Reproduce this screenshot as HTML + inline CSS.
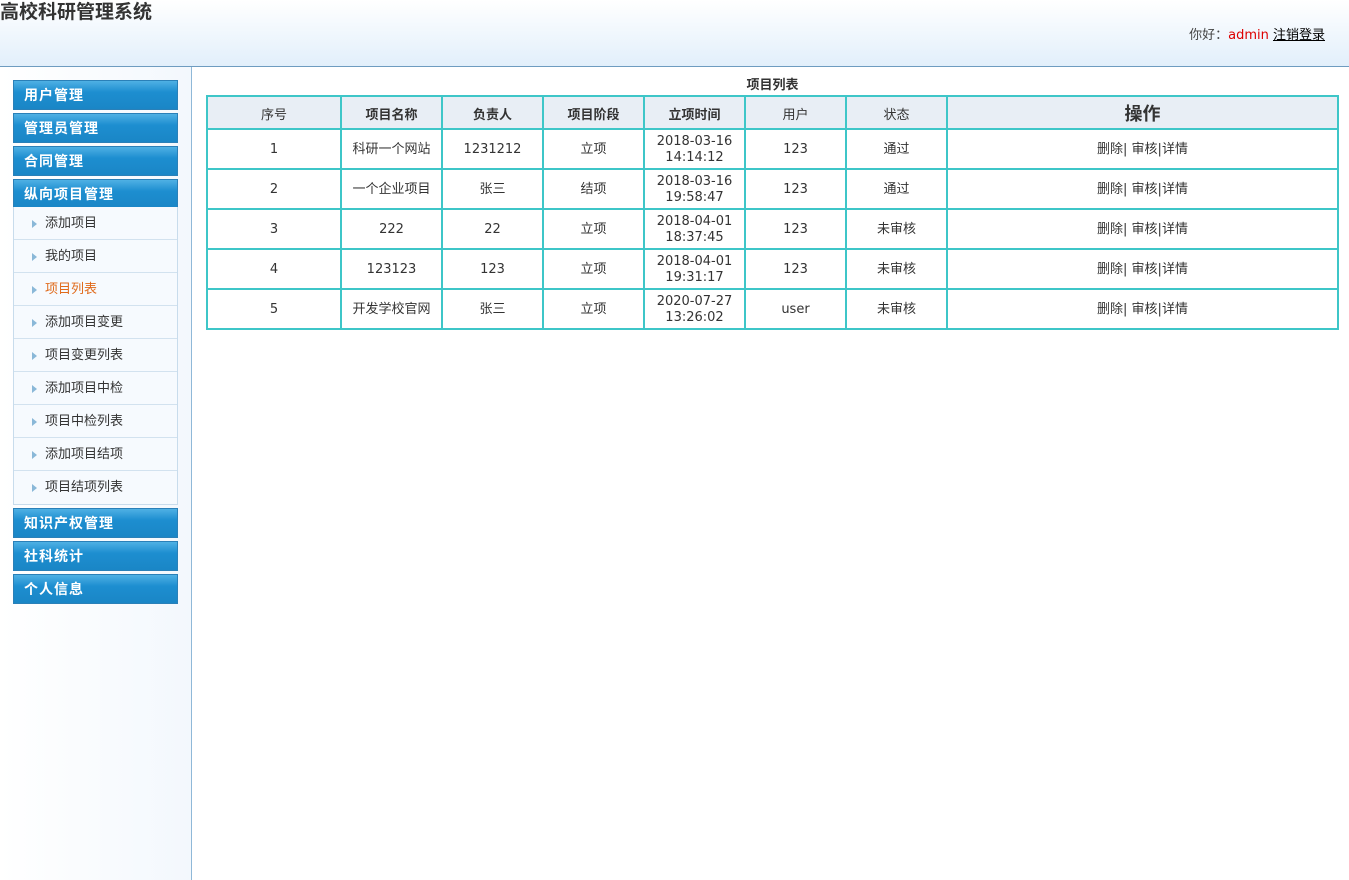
<!DOCTYPE html>
<html><head><meta charset="utf-8"><style>
*{margin:0;padding:0;box-sizing:border-box}
body{width:1349px;height:880px;overflow:hidden;font-family:"DejaVu Sans","Noto Sans CJK SC",sans-serif;font-size:13px;color:#333;background:#fff;position:relative}
#hd{position:absolute;left:0;top:0;width:1349px;height:67px;background:linear-gradient(#fff,#e2effb);border-bottom:1px solid #6e9cc0}
#hd h1{position:absolute;left:0;top:1px;font-size:19px;font-weight:bold;color:#333;line-height:24px;font-family:"Liberation Sans","Noto Sans CJK SC",sans-serif}
#hd .u{position:absolute;right:24px;top:24px;font-size:13px;color:#444}
#hd .u span{color:#d00}
#hd .u a{color:#000;text-decoration:underline}
#sb{position:absolute;left:0;top:67px;width:192px;height:813px;background:linear-gradient(90deg,#fff,#f3f8fd);border-right:1px solid #8fb8d8}
.b{position:absolute;left:13px;width:165px;height:30px;background:linear-gradient(#4fb0e4,#1d8ed0 40%,#1a86c6);border:1px solid #2a80b8;color:#fff;font-weight:bold;font-size:14px;line-height:29px;padding-left:10px;letter-spacing:1px;font-family:"Liberation Sans","Noto Sans CJK SC",sans-serif}
.sub{position:absolute;left:13px;top:140px;width:165px;background:#f6fafe;border:1px solid #c8dcec;border-top:none}
.sub div{height:33px;line-height:34px;border-bottom:1px solid #d2e2ef;padding-left:31px;position:relative;color:#333}
.sub div:last-child{border-bottom:none}
.sub div:before{content:"";position:absolute;left:18px;top:13px;border-left:5px solid #8ab8d8;border-top:4px solid transparent;border-bottom:4px solid transparent}
.sub .on{color:#e06a1a}
#tt{position:absolute;left:207px;width:1131px;top:74px;text-align:center;font-weight:bold;font-size:13px}
table{position:absolute;left:206px;top:95px;border-collapse:collapse;width:1133px}
td,th{border:2px solid #3ec6c8;text-align:center;font-size:13px}
th{background:#e8eef5;height:33px;font-weight:bold;padding-top:1px}
td{height:40px;line-height:16px;padding-top:2px}
</style></head><body>
<div id="hd"><h1>高校科研管理系统</h1><div class="u">你好：<span>admin</span> <a>注销登录</a></div></div>
<div id="sb">
<div class="b" style="top:13px">用户管理</div>
<div class="b" style="top:46px">管理员管理</div>
<div class="b" style="top:79px">合同管理</div>
<div class="b" style="top:112px">纵向项目管理</div>
<div class="sub">
<div>添加项目</div><div>我的项目</div><div class="on">项目列表</div><div>添加项目变更</div><div>项目变更列表</div><div>添加项目中检</div><div>项目中检列表</div><div>添加项目结项</div><div>项目结项列表</div>
</div>
<div class="b" style="top:441px">知识产权管理</div>
<div class="b" style="top:474px">社科统计</div>
<div class="b" style="top:507px">个人信息</div>
</div>
<div id="tt">项目列表</div>
<table>
<tr><th style="width:134px;font-weight:normal">序号</th><th style="width:101px">项目名称</th><th style="width:101px">负责人</th><th style="width:101px">项目阶段</th><th style="width:101px">立项时间</th><th style="width:101px;font-weight:normal">用户</th><th style="width:101px;font-weight:normal">状态</th><th style="font-size:18px">操作</th></tr>
<tr><td>1</td><td>科研一个网站</td><td>1231212</td><td>立项</td><td>2018-03-16<br>14:14:12</td><td>123</td><td>通过</td><td>删除| 审核|详情</td></tr>
<tr><td>2</td><td>一个企业项目</td><td>张三</td><td>结项</td><td>2018-03-16<br>19:58:47</td><td>123</td><td>通过</td><td>删除| 审核|详情</td></tr>
<tr><td>3</td><td>222</td><td>22</td><td>立项</td><td>2018-04-01<br>18:37:45</td><td>123</td><td>未审核</td><td>删除| 审核|详情</td></tr>
<tr><td>4</td><td>123123</td><td>123</td><td>立项</td><td>2018-04-01<br>19:31:17</td><td>123</td><td>未审核</td><td>删除| 审核|详情</td></tr>
<tr><td>5</td><td>开发学校官网</td><td>张三</td><td>立项</td><td>2020-07-27<br>13:26:02</td><td>user</td><td>未审核</td><td>删除| 审核|详情</td></tr>
</table>
</body></html>
